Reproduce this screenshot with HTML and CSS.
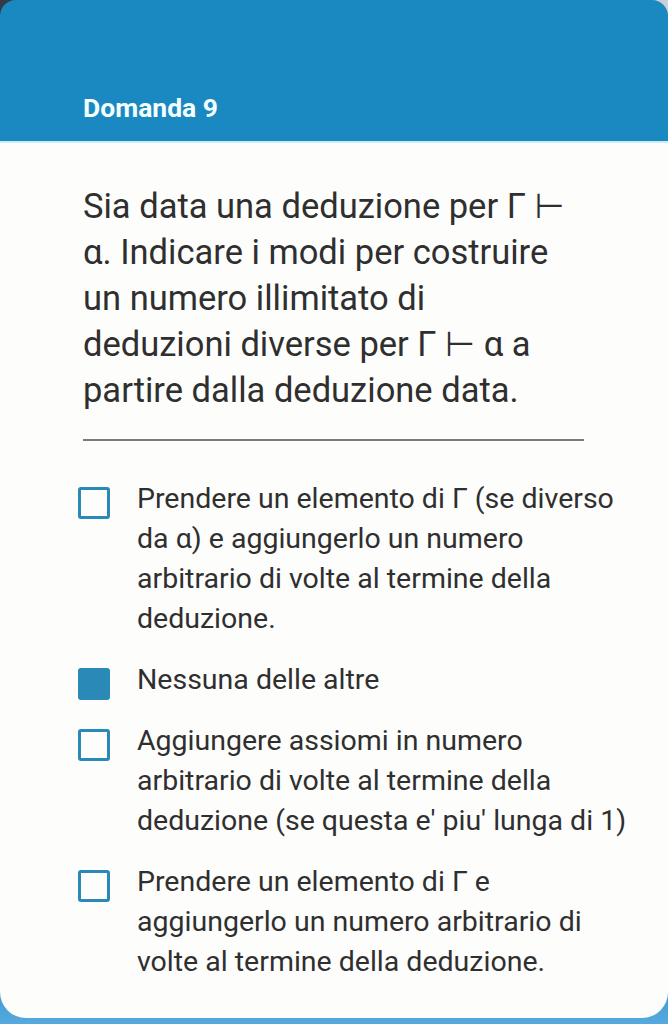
FILE: index.html
```html
<!DOCTYPE html>
<html lang="it">
<head>
<meta charset="utf-8">
<link rel="stylesheet" href="styles.css">
</head>
<body>
<div class="screen">
  <header class="header">
    <h1 class="title">Domanda 9</h1>
  </header>
  <main class="card">
    <p class="question">Sia data una deduzione per Γ ⊢ α. Indicare i modi per costruire un numero illimitato di deduzioni diverse per Γ ⊢ α a partire dalla deduzione data.</p>
    <hr class="divider">
    <ul class="options">
      <li class="option"><span class="box"></span><span class="label">Prendere un elemento di Γ (se diverso da α) e aggiungerlo un numero arbitrario di volte al termine della deduzione.</span></li>
      <li class="option"><span class="box checked"></span><span class="label">Nessuna delle altre</span></li>
      <li class="option"><span class="box"></span><span class="label">Aggiungere assiomi in numero arbitrario di volte al termine della deduzione (se questa e' piu' lunga di 1)</span></li>
      <li class="option"><span class="box"></span><span class="label">Prendere un elemento di Γ e aggiungerlo un numero arbitrario di volte al termine della deduzione.</span></li>
    </ul>
  </main>
</div>
</body>
</html>
```

FILE: styles.css
```css
html, body {
  margin: 0;
  padding: 0;
}
body {
  background: linear-gradient(90deg, #2f3b47, #c9d2da);
  font-family: Roboto, "Noto Sans", "DejaVu Sans", sans-serif;
}
.screen {
  height: 1024px;
  display: flex;
  flex-direction: column;
  background: linear-gradient(#1a89c1 0, #1a89c1 940px, #56a9dc 1024px);
  border-radius: 16px 16px 0 0;
  overflow: hidden;
}
.header {
  height: 143px;
  flex: none;
  display: flex;
  align-items: flex-end;
  border-bottom: 2px solid #c9eef7;
  box-sizing: border-box;
}
.title {
  margin: 0 0 16px 83px;
  color: #f4ffff;
  font-size: 26.5px;
  font-weight: 700;
  line-height: 34px;
}
.card {
  flex: 1;
  background: #fdfdfc;
  border-radius: 0 0 26px 26px;
  margin-bottom: 6px;
  padding: 40px 20px 0 83px;
}
.question {
  margin: 0;
  font-size: 34.5px;
  line-height: 46px;
  color: #2f2f2f;
  max-width: 490px;
}
.divider {
  border: none;
  border-top: 2px solid #7a7a7a;
  margin: 26px 0 0 0;
  width: 501px;
}
.options {
  list-style: none;
  margin: 38px 0 0 -5px;
  padding: 0;
  display: flex;
  flex-direction: column;
  gap: 21px;
}
.option {
  display: flex;
  gap: 27px;
  align-items: flex-start;
}
.box {
  flex: none;
  width: 32px;
  height: 32px;
  box-sizing: border-box;
  border: 3px solid #2a89b7;
  border-radius: 3px;
  margin-top: 8px;
}
.box.checked {
  background: #2a89b7;
}
.label {
  font-size: 28.5px;
  line-height: 40px;
  color: #2f2f2f;
  width: 500px;
}
```
